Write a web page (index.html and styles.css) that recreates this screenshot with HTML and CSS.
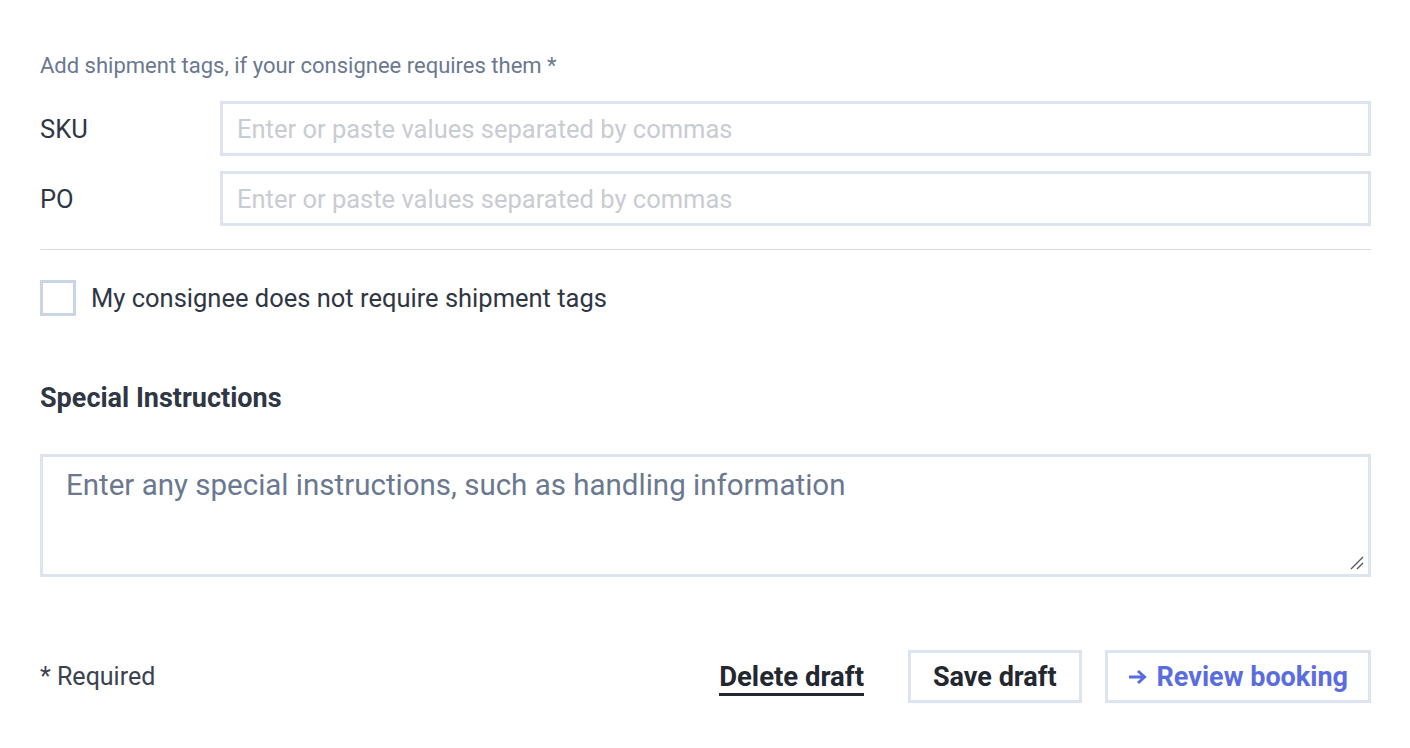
FILE: index.html
```html
<!DOCTYPE html>
<html>
<head>
<meta charset="utf-8">
<link rel="stylesheet" href="styles.css">
</head>
<body>
<div class="page">
  <p class="caption">Add shipment tags, if your consignee requires them *</p>
  <div class="tag-row">
    <label class="tag-label">SKU</label>
    <div class="input">Enter or paste values separated by commas</div>
  </div>
  <div class="tag-row">
    <label class="tag-label">PO</label>
    <div class="input">Enter or paste values separated by commas</div>
  </div>
  <hr class="divider">
  <div class="check-row">
    <span class="checkbox"></span>
    <span class="check-label">My consignee does not require shipment tags</span>
  </div>
  <h2 class="section-title">Special Instructions</h2>
  <div class="textarea">
    <span class="ta-placeholder">Enter any special instructions, such as handling information</span>
    <svg class="grip" width="14" height="14" viewBox="0 0 14 14"><path d="M13 1 L1 13 M13 7 L7 13" stroke="#555" stroke-width="1.3" fill="none"/></svg>
  </div>
  <div class="footer">
    <span class="required">* Required</span>
    <div class="actions">
      <span class="link-btn">Delete draft</span>
      <span class="btn">Save draft</span>
      <span class="btn btn-primary"><svg class="arrow" width="19" height="16" viewBox="0 0 19 16"><path d="M1 8 H16 M10 2 L16.5 8 L10 14" stroke="#5a6de0" stroke-width="3" fill="none"/></svg>Review booking</span>
    </div>
  </div>
</div>
</body>
</html>
```
FILE: styles.css
```css
* { box-sizing: border-box; }
body { margin: 0; background: #fff; font-family: "Roboto", "Liberation Sans", sans-serif; color: #2f3644; }
.page { padding: 52px 39px 0 40px; width: 1410px; }
.caption { margin: 0 0 21px; font-size: 22px; line-height: 28px; color: #6a7890; }
.tag-row { display: flex; align-items: center; margin-bottom: 15px; }
.tag-label { width: 180px; font-size: 25.5px; color: #2f3644; }
.input { flex: 1; height: 55px; border: 3px solid #dde4f0; padding: 0 14px; display: flex; align-items: center; font-size: 25.5px; color: #c9ccd2; }
.divider { border: 0; border-top: 1px solid #d9dde3; margin: 23px 0 30px; }
.check-row { display: flex; align-items: center; gap: 15px; }
.checkbox { width: 36px; height: 36px; border: 3px solid #c9d4e6; }
.check-label { font-size: 25.5px; line-height: 36px; color: #2f3644; }
.section-title { margin: 66px 0 0; font-size: 27px; line-height: 32px; font-weight: 700; color: #2f3644; }
.textarea { position: relative; margin-top: 40px; height: 123px; border: 3px solid #dde4f0; padding: 10px 23px; line-height: 36px; }
.ta-placeholder { font-size: 29.5px; color: #6a7890; }
.grip { position: absolute; right: 4px; bottom: 4px; }
.footer { display: flex; align-items: center; justify-content: space-between; margin-top: 73px; }
.required { font-size: 25px; color: #3b4250; }
.actions { display: flex; align-items: center; }
.link-btn { font-size: 27.5px; line-height: 32px; font-weight: 700; color: #23272f; border-bottom: 3px solid #23272f; margin-top: 4px; margin-right: 44px; }
.btn { height: 53px; padding: 0 22px; border: 3px solid #dde4f0; display: flex; align-items: center; font-size: 27px; font-weight: 700; color: #23272f; }
.btn + .btn { margin-left: 23px; }
.btn-primary { color: #5a6de0; padding: 0 20px; }
.arrow { margin-right: 10px; }
```
